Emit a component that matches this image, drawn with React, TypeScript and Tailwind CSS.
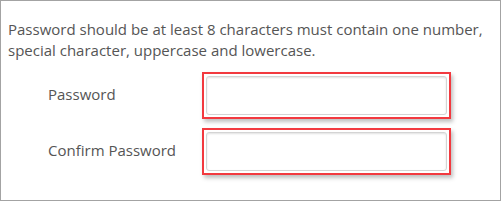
export default function App() {
  return (
    <div
      className="w-[501px] h-[201px] border border-[#a3a3a3] bg-white text-[#555] pl-[7px] pt-[18px]"
      style={{ fontFamily: '"Open Sans", "Noto Sans", sans-serif' }}
    >
      <p className="text-[15px] leading-[21px]">
        Password should be at least 8 characters must contain one number, special character, uppercase and lowercase.
      </p>
      <div className="mt-[11px] flex flex-col gap-[9px]">
        <Row label="Password" />
        <Row label="Confirm Password" />
      </div>
    </div>
  );
}

function Row({ label }: { label: string }) {
  return (
    <div className="flex items-center">
      <label className="w-[194px] shrink-0 pl-[40px] text-[15px] leading-[21px] -mt-[3px]">{label}</label>
      <div className="w-[249px] h-[47px] shrink-0 border-2 border-[#f2393f] p-[2px] shadow-[2px_3px_4px_rgba(0,0,0,0.25)]">
        <input
          type="password"
          className="block w-full h-full rounded-[3px] border border-[#d4d4d4] bg-white shadow-[inset_0_1px_2px_rgba(0,0,0,0.12)] outline-none"
        />
      </div>
    </div>
  );
}
